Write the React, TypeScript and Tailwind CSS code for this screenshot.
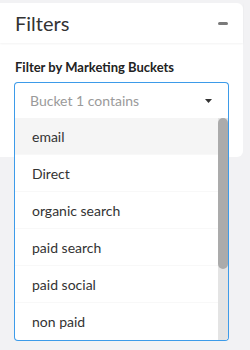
import React from 'react';

const App = () => {
  const options = ['email', 'Direct', 'organic search', 'paid search', 'paid social', 'non paid'];

  return (
    <div className="w-[250px] h-[350px] overflow-hidden bg-[#f2f2f4] pt-[3px] font-['Lato','Liberation_Sans',sans-serif]">
      <div className="w-[243px] h-[154px] bg-white rounded-r-md">
        {/* Header */}
        <div className="h-[40px] flex items-center justify-between pl-[15px] pr-[15px] shadow-[0_1px_2px_rgba(0,0,0,0.05)]">
          <span className="text-[20px] text-[#333] leading-none">Filters</span>
          <span className="block w-[10px] h-[3px] bg-[#7a7a7a] rounded-sm" />
        </div>

        {/* Body */}
        <div className="pl-[14px] pt-[16px]">
          <div className="text-[13px] font-bold text-[#222] leading-[16px] pl-[1px]">Filter by Marketing Buckets</div>
          <div className="relative mt-[7px] w-[215px]">
            <div className="h-[36px] border border-b-0 border-[#3d9be9] rounded-t-[4px] flex items-center justify-between pl-[15px] pr-[16px]">
              <span className="text-[14px] text-[#9a9a9a]">Bucket 1 contains</span>
              <svg width="7" height="4" viewBox="0 0 7 4">
                <path d="M0 0 L7 0 L3.5 4 Z" fill="#333" />
              </svg>
            </div>
            {/* Menu */}
            <div className="absolute left-0 top-[36px] w-[215px] border border-t-0 border-[#3d9be9] rounded-b-[4px] bg-white flex">
              <div className="flex-1">
                {options.map((opt, i) => (
                  <div
                    key={opt}
                    className={`h-[37px] flex items-center pl-[17px] text-[14px] text-[#333] ${i === 0 ? 'bg-[#f5f5f5]' : ''} ${i < options.length - 1 ? 'border-b border-[#f8f8f8]' : ''}`}
                  >
                    {opt}
                  </div>
                ))}
              </div>
              <div className="w-[10px] bg-[#e4e4e4] rounded-br-[3px]">
                <div className="h-[151px] bg-[#ababab] rounded-full" />
              </div>
            </div>
          </div>
        </div>
      </div>
    </div>
  );
};

export default App;
